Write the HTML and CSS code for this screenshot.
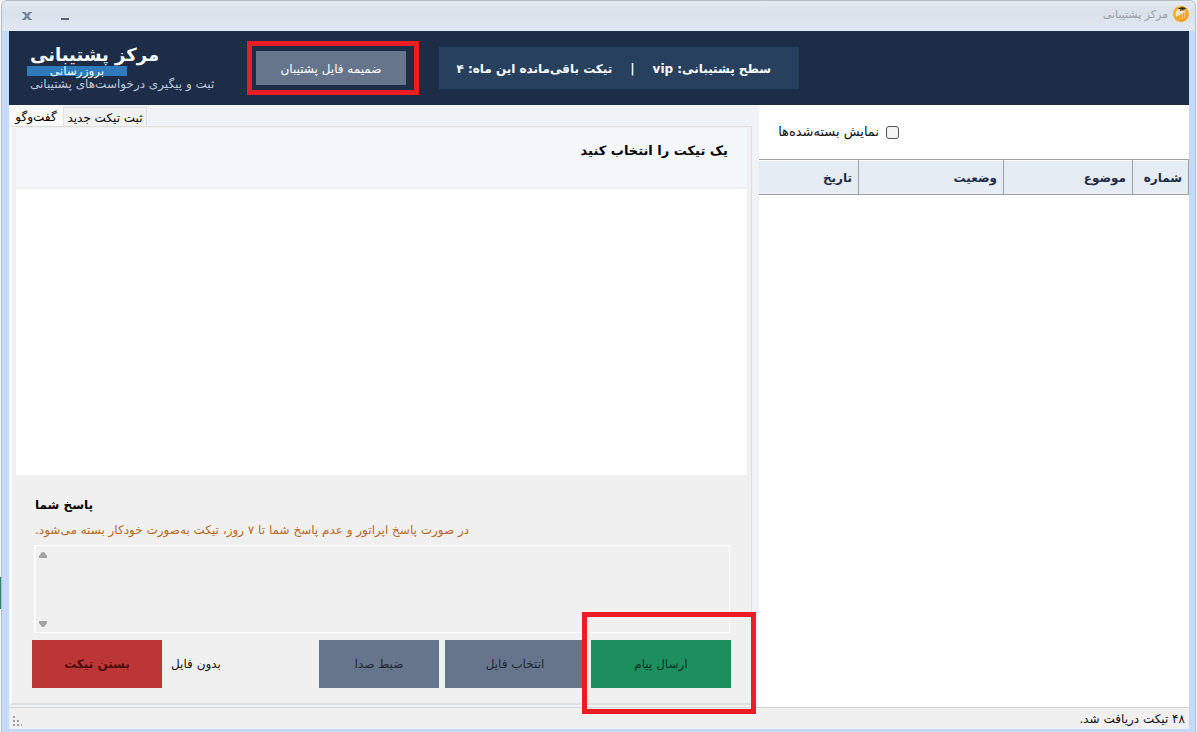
FILE: index.html
```html
<!DOCTYPE html>
<html lang="fa" dir="rtl">
<head>
    <meta charset="UTF-8">
    <meta name="viewport" content="width=device-width, initial-scale=1.0">
    <title>مرکز پشتیبانی</title>
    <link rel="stylesheet" href="styles.css">
</head>
<body>
    <div class="window">
        <div class="titlebar">
            <svg class="app-icon" viewBox="0 0 16 16" width="16" height="16">
                <circle cx="8" cy="8" r="6.800" fill="#f3e6c8" stroke="#f7a81b" stroke-width="2.400"/>
                <path d="M3.500 10.500 6 9.500V14l-2.500-1.500zM6.500 9l2.300-1v7H6.500zM9.500 7.500l2-1.500v8.500h-2zM12.200 5.500l1.600-1v7.500l-1.600 1.500z" fill="#f59d16"/>
                <path d="M4.800 2.700 9 1l4.500 1.300L9.500 4z" fill="#33291c"/>
                <path d="M7 3.800c1.500-.6 3.500-.6 4.600-.1v1.100c-1.400-.5-3.100-.5-4.600.1z" fill="#6b5326"/>
            </svg>
            <span class="window-title">مرکز پشتیبانی</span>
            <div class="window-buttons">
                <button type="button" aria-label="کوچک کردن">
                    <svg viewBox="0 0 10 10" width="10" height="10"><path d="M1 7h8v2H1z" fill="#5a6675"/></svg>
                </button>
                <button type="button" aria-label="بستن">
                    <svg viewBox="0 0 10 10" width="10" height="10"><path d="M0 1h3.500L5 3.200 6.500 1H10v1H9L6.500 5 9 8h1v1H6.500L5 6.800 3.500 9H0V8h1l2.500-3L1 2H0z" fill="#74869b"/></svg>
                </button>
            </div>
        </div>

        <div class="client">
            <header class="header">
                <div class="plan">
                    <span>سطح پشتیبانی: vip</span>
                    <span>|</span>
                    <span>تیکت باقی‌مانده این ماه: ۴</span>
                </div>
                <div class="marked">
                    <button type="button" class="attach">ضمیمه فایل پشتیبان</button>
                    <span class="mark mark-attach"></span>
                </div>
                <div class="brand">
                    <h1>مرکز پشتیبانی</h1>
                    <button type="button" class="refresh">بروزرسانی</button>
                    <p>ثبت و پیگیری درخواست‌های پشتیبانی</p>
                </div>
            </header>

            <main class="main">
                <section class="tickets">
                    <label class="filter">
                        <input type="checkbox">
                        نمایش بسته‌شده‌ها
                    </label>
                    <table>
                        <thead>
                            <tr>
                                <th class="col-number">شماره</th>
                                <th class="col-subject">موضوع</th>
                                <th class="col-status">وضعیت</th>
                                <th>تاریخ</th>
                            </tr>
                        </thead>
                    </table>
                </section>

                <section class="conversation">
                    <div class="tabs">
                        <button type="button" class="tab">ثبت تیکت جدید</button>
                        <button type="button" class="tab active">گفت‌وگو</button>
                    </div>
                    <div class="tab-page">
                        <h2>یک تیکت را انتخاب کنید</h2>
                        <div class="messages"></div>
                        <div class="reply">
                            <label class="reply-label" for="reply">پاسخ شما</label>
                            <p class="notice">در صورت پاسخ اپراتور و عدم پاسخ شما تا ۷ روز، تیکت به‌صورت خودکار بسته می‌شود.</p>
                            <div class="reply-box">
                                <textarea id="reply"></textarea>
                                <svg class="arrow up" viewBox="0 0 8 6" width="8" height="6"><path d="M3 0h2l3 4v2H0V4z" fill="#a3a3a3"/></svg>
                                <svg class="arrow down" viewBox="0 0 8 6" width="8" height="6"><path d="M0 0h8v2L5 6H3L0 2z" fill="#a3a3a3"/></svg>
                            </div>
                            <div class="actions">
                                <div class="marked">
                                    <button type="button" class="btn send">ارسال پیام</button>
                                    <span class="mark mark-send"></span>
                                </div>
                                <button type="button" class="btn choose">انتخاب فایل</button>
                                <button type="button" class="btn record">ضبط صدا</button>
                                <span class="file-name">بدون فایل</span>
                                <button type="button" class="btn close">بستن تیکت</button>
                            </div>
                        </div>
                    </div>
                </section>
            </main>

            <footer class="statusbar">
                <span>۴۸ تیکت دریافت شد.</span>
                <svg class="grip" viewBox="0 0 10 10" width="10" height="10">
                    <path d="M0 0h2v2H0zM0 4h2v2H0zM4 4h2v2H4zM0 8h2v2H0zM4 8h2v2H4zM8 8h1v2H8z" fill="#a0a0a0"/>
                </svg>
            </footer>
        </div>
    </div>
</body>
</html>
```

FILE: styles.css
```css
* {
    box-sizing: border-box;
}
body {
    margin: 0;
    background: linear-gradient(#3c7a72, #3c7a72) 0 577px / 1px 32px no-repeat #f4f6f8;
    font-family: "DejaVu Sans", Tahoma, sans-serif;
    font-size: 12px;
    line-height: 16px;
    color: #111;
}
h1, h2, p {
    margin: 0;
}
button {
    border: 0;
    padding: 0;
    font: inherit;
    cursor: pointer;
}
.window {
    display: flex;
    flex-direction: column;
    min-height: 100vh;
    margin: 0 1px;
    border: 1px solid #b4bcc6;
    border-bottom: 0;
    border-radius: 6px 6px 0 0;
    background: #c3dafa;
    overflow: hidden;
}
.titlebar {
    display: flex;
    align-items: center;
    gap: 5px;
    height: 30px;
    padding: 0 6px 4px 20px;
    background: linear-gradient(#e4e9f0, #d9e1eb 40%, #e1e8f1);
}
.window-title {
    padding-top: 2px;
    font-size: 11px;
    color: #989ca3;
}
.window-buttons {
    display: flex;
    gap: 28px;
    margin-right: auto;
    padding-top: 4px;
}
.window-buttons button {
    display: flex;
    background: none;
}
.client {
    flex: 1;
    display: flex;
    flex-direction: column;
    margin: 0 6px 3px 7px;
    background: #eff3f8;
}

.header {
    display: flex;
    justify-content: flex-end;
    align-items: center;
    height: 74px;
    padding-left: 18px;
    background: #1d2d47;
    color: #fff;
}
.plan {
    display: flex;
    align-items: center;
    gap: 18px;
    width: 360px;
    height: 42px;
    padding: 2px 28px 0;
    background: #27405e;
    font-weight: bold;
    white-space: nowrap;
}
.marked {
    position: relative;
}
.header .marked {
    margin: 0 33px 0 29px;
}
.attach {
    width: 150px;
    height: 34px;
    padding-top: 2px;
    background: #66758c;
    color: #fff;
}
.mark {
    position: absolute;
    border: 5px solid #ec1c24;
    pointer-events: none;
}
.mark-attach {
    inset: -10px -13px -10px -9px;
}
.mark-send {
    inset: -28px -25px -26px -9px;
}
.brand {
    display: flex;
    flex-direction: column;
    align-items: flex-end;
    width: 200px;
    padding-bottom: 4px;
}
.brand h1 {
    padding: 4px 0 0 3px;
    font-size: 18px;
    line-height: 22px;
}
.refresh {
    width: 100px;
    height: 10px;
    background: #2e7abb;
    color: #fff;
    line-height: 8px;
}
.brand p {
    padding-left: 3px;
    color: #bcc8da;
    white-space: nowrap;
}

.main {
    flex: 1;
    display: flex;
}
.tickets {
    width: 430px;
    background: #fff;
}
.filter {
    display: flex;
    align-items: center;
    gap: 7px;
    height: 54px;
    padding-right: 290px;
    font-size: 13px;
    white-space: nowrap;
}
.filter input {
    appearance: none;
    width: 13px;
    height: 13px;
    margin: 0;
    border: 1px solid #555;
    border-radius: 3px;
    background: #f3f3f3;
}
table {
    width: 100%;
    border-collapse: separate;
    border-spacing: 0;
    border-top: 1px solid #a0a0a0;
    table-layout: fixed;
}
th {
    height: 35px;
    padding: 2px 6px 0;
    border-left: 1px solid #a0a0a0;
    border-bottom: 1px solid #a0a0a0;
    box-shadow: inset 0 1px #fff;
    background: #e6ecf4;
    color: #1d2d47;
    text-align: right;
}
th:last-child {
    border-left: 0;
}
.col-number {
    width: 57px;
    border-right: 1px solid #a0a0a0;
}
.col-subject {
    width: 129px;
}
.col-status {
    width: 145px;
}

.conversation {
    flex: 1;
    display: flex;
    flex-direction: column;
    padding: 0 7px 2px 0;
}
.tabs {
    display: flex;
    justify-content: flex-end;
    align-items: flex-end;
    height: 21px;
}
.tab {
    width: 84px;
    height: 19px;
    padding-top: 2px;
    border: 1px solid #e0e0e0;
    border-bottom: 0;
    background: #f2f2f2;
    white-space: nowrap;
}
.tab.active {
    width: 54px;
    height: 21px;
    border: 0;
    background: #fafafa;
}
.tab-page {
    flex: 1;
    display: flex;
    flex-direction: column;
    padding: 1px 4px 2px;
    border: 1px solid #dedede;
    border-left: 3px solid #fafafa;
    border-bottom: 2px solid #e0e0e0;
    background: #f0f0f0;
}
h2 {
    height: 59px;
    padding: 13px 19px;
    background: #f4f8fd;
    font-size: 13px;
    line-height: 20px;
    color: #000;
}
.messages {
    flex: 1;
    margin-top: 2px;
    background: #fff;
}
.reply {
    display: flex;
    flex-direction: column;
    padding: 20px 16px 13px;
}
.reply-label,
.notice {
    padding-left: 3px;
    text-align: left;
}
.reply-label {
    line-height: 20px;
    font-weight: bold;
    color: #000;
}
.notice {
    margin: 5px 0;
    line-height: 20px;
    color: #b66a1e;
}
.reply-box {
    position: relative;
    display: flex;
    margin: 0 1px 7px 2px;
}
textarea {
    flex: 1;
    height: 88px;
    border: 1px solid #fff;
    border-left-width: 2px;
    background: #f0f0f0;
    font: inherit;
    resize: none;
}
.arrow {
    position: absolute;
    left: 5px;
}
.arrow.up {
    top: 7px;
}
.arrow.down {
    bottom: 6px;
}
.actions {
    display: flex;
    align-items: center;
    gap: 6px;
}
.btn {
    height: 48px;
    background: #66758c;
    color: #1f2733;
}
.send {
    width: 140px;
    background: #1d8f5f;
    color: #0d3323;
}
.choose {
    width: 140px;
}
.record {
    width: 120px;
}
.file-name {
    margin-right: auto;
    padding-left: 3px;
}
.close {
    width: 130px;
    background: #bd3636;
    color: #4a0d0d;
    font-weight: bold;
}
.statusbar {
    display: flex;
    justify-content: space-between;
    align-items: center;
    height: 22px;
    padding: 0 4px;
    border-top: 1px solid #d5d5d5;
    background: #f0f0f0;
}
.grip {
    margin-top: 5px;
}
```
